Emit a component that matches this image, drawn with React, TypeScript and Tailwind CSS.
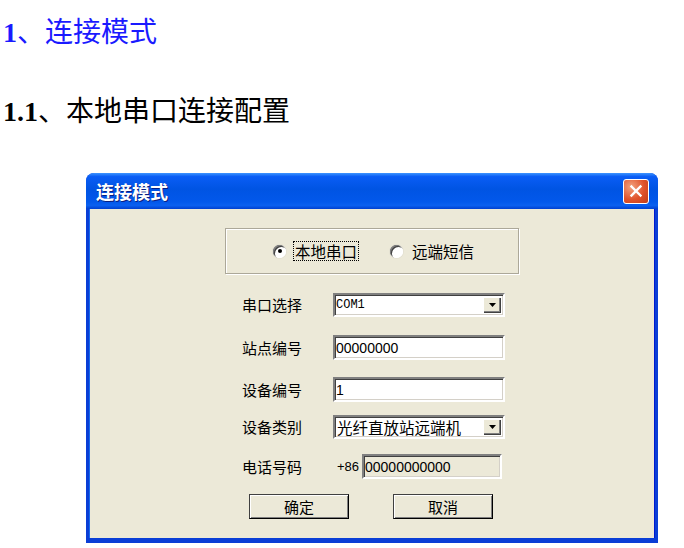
import * as React from 'react'

const UI_FONT = "font-['Noto_Sans_CJK_SC','Liberation_Sans',sans-serif]"

function Radio({ checked, label, focused }: { checked?: boolean; label: string; focused?: boolean }) {
  return (
    <div className="flex items-center gap-[8px]">
      <div className="w-[13px] h-[13px] rounded-full bg-white flex items-center justify-center shadow-[inset_1px_1px_0_#808080,inset_-1px_-1px_0_#ffffff,inset_2px_2px_0_#404040,0_0_0_1px_#e4e1d2]">
        {checked && <div className="w-[4px] h-[4px] rounded-full bg-black" />}
      </div>
      <span
        className={`text-[15.5px] leading-[18px] text-black px-[1px] ${focused ? 'outline-1 outline-dotted outline-black' : ''}`}
      >
        {label}
      </span>
    </div>
  )
}

function Sunken({ className = '', children }: { className?: string; children?: React.ReactNode }) {
  return (
    <div
      className={`flex items-center border-2 border-t-[#808080] border-l-[#808080] border-b-white border-r-white shadow-[inset_1px_1px_0_#404040,inset_-1px_-1px_0_#d4d0c8] ${className}`}
    >
      {children}
    </div>
  )
}

function DropArrow() {
  return (
    <div className="w-[18px] h-[16px] mr-[2px] bg-[#ece9d8] flex items-center justify-center shadow-[inset_1px_1px_0_#ffffff,inset_-1px_-1px_0_#404040,inset_-2px_-2px_0_#808080]">
      <svg width="9" height="5" viewBox="0 0 9 5">
        <path d="M1 0h7L4.5 4z" fill="#000" />
      </svg>
    </div>
  )
}

function Row({ label, mt, children }: { label: string; mt: string; children: React.ReactNode }) {
  return (
    <div className={`flex items-center pl-[152px] ${mt}`}>
      <span className="w-[91px] text-[15px] leading-[18px] text-black">{label}</span>
      {children}
    </div>
  )
}

function XpButton({ label }: { label: string }) {
  return (
    <button className="w-[100px] h-[25px] bg-[#ece9d8] border border-t-[#404040] border-l-[#404040] border-r-black border-b-black shadow-[inset_1px_1px_0_#ffffff,inset_-1px_-1px_0_#808080] text-[15px] leading-[18px] text-black">
      {label}
    </button>
  )
}

export default function App() {
  return (
    <div className="relative w-[684px] h-[548px] bg-white overflow-hidden">
      <h1 className="mt-[15px] pl-[3px] text-[28px] leading-[36px] text-[#1a1aff] font-['Liberation_Serif','Noto_Sans_CJK_SC',serif]">
        <span className="font-bold">1</span>、连接模式
      </h1>
      <h2 className="mt-[43px] pl-[3px] text-[28px] leading-[36px] text-black font-['Liberation_Serif','Noto_Sans_CJK_SC',serif]">
        <span className="font-bold">1.1</span>、本地串口连接配置
      </h2>

      {/* Dialog window */}
      <div className={`mt-[43px] ml-[86px] w-[572px] h-[370px] flex flex-col rounded-t-[8px] overflow-hidden bg-[#0a3ed6] ${UI_FONT}`}>
        {/* Title bar */}
        <div className="h-[36px] flex items-center justify-between pl-[10px] pr-[9px] bg-[linear-gradient(to_bottom,#3d95ff_0%,#0a5df5_10%,#0054e3_45%,#0258eb_80%,#0a60f0_90%,#0040d0_100%)]">
          <span className="text-white text-[18px] font-bold leading-[20px] [text-shadow:1px_1px_0_#0a1e80]">连接模式</span>
          <div className="w-[26px] h-[25px] rounded-[3px] border border-white bg-[radial-gradient(circle_at_30%_30%,#f3a37f,#e0532c_55%,#c13c16)] flex items-center justify-center">
            <svg width="14" height="14" viewBox="0 0 14 14">
              <path d="M2.5 2.5l9 9M11.5 2.5l-9 9" stroke="#fff" strokeWidth="2.4" strokeLinecap="square" />
            </svg>
          </div>
        </div>

        {/* Client area */}
        <div className="flex-1 mx-[4px] mb-[5px] bg-[#ece9d8] shadow-[-1px_0_0_#166aee,1px_0_0_#0019cf] flex flex-col">
          <div className="mt-[19px] ml-[135px] w-[294px] h-[46px] border border-[#aca899] shadow-[inset_1px_1px_0_#ffffff,1px_1px_0_#ffffff] flex items-center">
            <div className="ml-[47px]">
              <Radio checked focused label="本地串口" />
            </div>
            <div className="ml-[32px]">
              <Radio label="远端短信" />
            </div>
          </div>

          <Row label="串口选择" mt="mt-[19px]">
            <Sunken className="w-[172px] h-[24px] bg-white justify-between">
              <span className="pl-[1px] text-[12px] leading-[14px] font-['Liberation_Mono',monospace] text-black">COM1</span>
              <DropArrow />
            </Sunken>
          </Row>

          <Row label="站点编号" mt="mt-[18px]">
            <Sunken className="w-[172px] h-[25px] bg-white">
              <span className="pl-[1px] text-[14px] leading-[16px] font-['Liberation_Sans',sans-serif] text-black">00000000</span>
            </Sunken>
          </Row>

          <Row label="设备编号" mt="mt-[17px]">
            <Sunken className="w-[172px] h-[25px] bg-white">
              <span className="pl-[1px] text-[14px] leading-[16px] font-['Liberation_Sans',sans-serif] text-black">1</span>
            </Sunken>
          </Row>

          <Row label="设备类别" mt="mt-[13px]">
            <Sunken className="w-[172px] h-[24px] bg-white justify-between">
              <span className="pl-[2px] text-[15.5px] leading-[18px] text-black">光纤直放站远端机</span>
              <DropArrow />
            </Sunken>
          </Row>

          <Row label="电话号码" mt="mt-[15px]">
            <span className="w-[29px] pl-[4px] text-[13px] leading-[16px] font-['Liberation_Sans',sans-serif] text-black">+86</span>
            <Sunken className="w-[140px] h-[25px] bg-[#ece9d8]">
              <span className="pl-[1px] text-[14px] leading-[16px] font-['Liberation_Sans',sans-serif] text-black">00000000000</span>
            </Sunken>
          </Row>

          <div className="mt-[15px] ml-[159px] flex gap-[44px]">
            <XpButton label="确定" />
            <XpButton label="取消" />
          </div>
        </div>
      </div>
    </div>
  )
}
